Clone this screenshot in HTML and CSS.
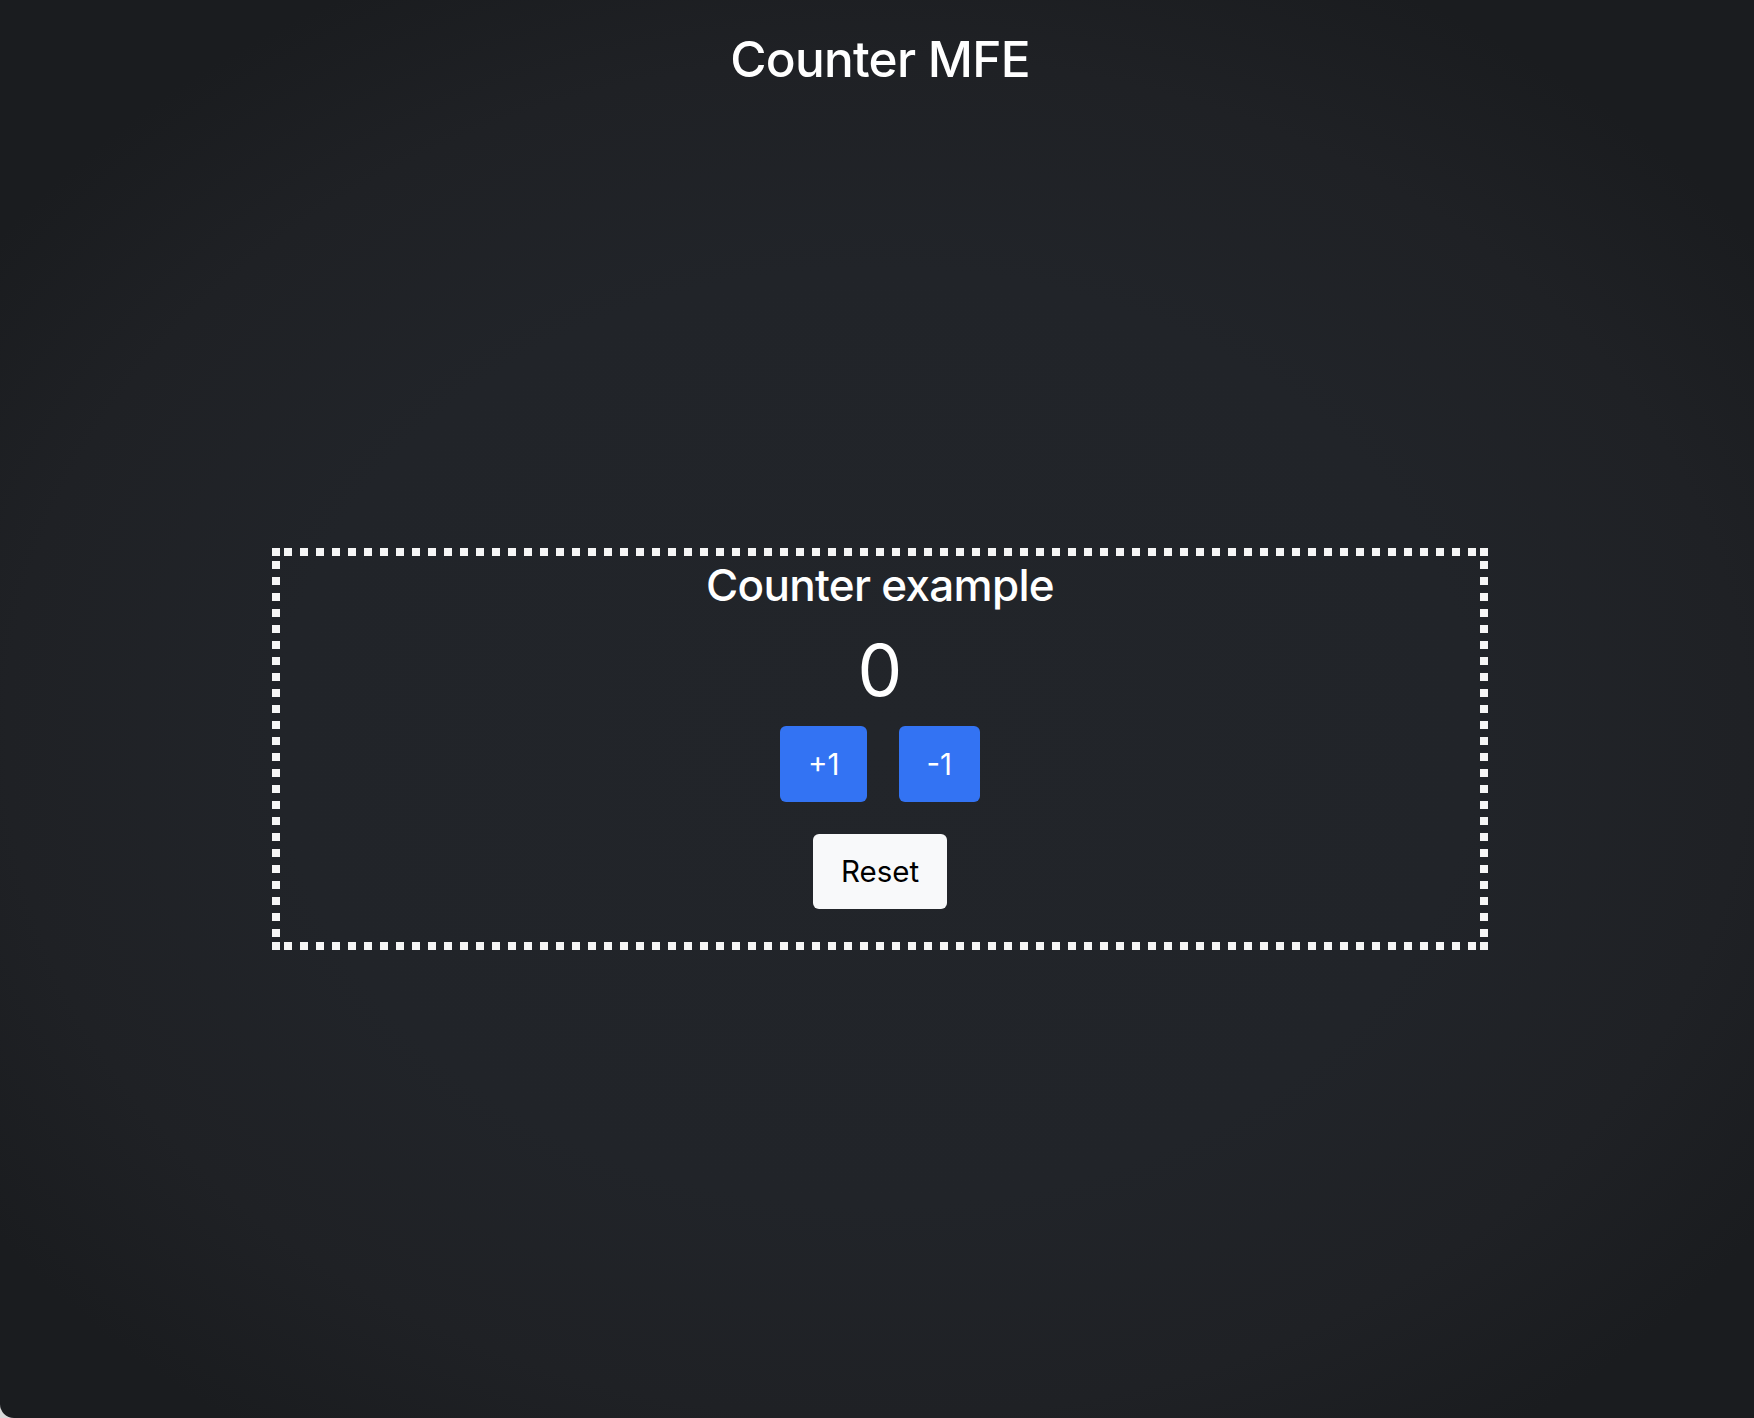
FILE: index.html
```html
<!DOCTYPE html>
<html lang="en">
<head>
<meta charset="utf-8">
<title>Counter MFE</title>
<link rel="stylesheet" href="styles.css">
</head>
<body>
<div class="page">
  <h1 class="title">Counter MFE</h1>
  <main class="main">
    <section class="counter-box">
      <h2 class="counter-heading">Counter example</h2>
      <div class="counter-value">0</div>
      <div class="button-row">
        <button class="btn btn-primary" type="button">+1</button>
        <button class="btn btn-primary" type="button">-1</button>
      </div>
      <div class="button-row reset-row">
        <button class="btn btn-light" type="button">Reset</button>
      </div>
    </section>
  </main>
</div>
</body>
</html>
```

FILE: styles.css
```css
html {
  background: #d9d9d9;
}
body {
  margin: 0;
  font-family: Inter, "Noto Sans", "Liberation Sans", sans-serif;
  color: #ffffff;
}
.page {
  min-height: 1418px;
  box-sizing: border-box;
  border-bottom-left-radius: 14px;
  overflow: hidden;
  background:
    radial-gradient(ellipse 62% 60% at 50% 52%, #22252a 0%, #212429 55%, #1f2125 80%, #1a1c1f 100%);
  padding-left: 6px;
}
.title {
  margin: 0;
  padding-top: 30px;
  font-size: 49.5px;
  line-height: 59.4px;
  font-weight: 500;
  letter-spacing: -0.015em;
  text-align: center;
}
.main {
  display: flex;
  justify-content: center;
}
.counter-box {
  width: 1216px;
  height: 402px;
  box-sizing: border-box;
  margin-top: 459px;
  padding: 10.6px 8px 8px;
  text-align: center;
  background:
    linear-gradient(#f6f6f6, #f6f6f6) 0 0 / 8px 8px no-repeat,
    linear-gradient(#f6f6f6, #f6f6f6) 100% 0 / 8px 8px no-repeat,
    linear-gradient(#f6f6f6, #f6f6f6) 0 100% / 8px 8px no-repeat,
    linear-gradient(#f6f6f6, #f6f6f6) 100% 100% / 8px 8px no-repeat,
    linear-gradient(90deg, #f6f6f6 8px, transparent 8px) 12px 0 / 16px 8px repeat-x,
    linear-gradient(90deg, #f6f6f6 8px, transparent 8px) 12px 100% / 16px 8px repeat-x,
    linear-gradient(180deg, #f6f6f6 8px, transparent 8px) 0 13px / 8px 16px repeat-y,
    linear-gradient(180deg, #f6f6f6 8px, transparent 8px) 100% 13px / 8px 16px repeat-y;
}
.counter-heading {
  margin: 0;
  font-size: 44px;
  line-height: 52.8px;
  font-weight: 500;
  letter-spacing: -0.016em;
}
.counter-value {
  margin-top: 16px;
  font-size: 71px;
  line-height: 85px;
  font-weight: 400;
}
.button-row {
  margin-top: 13px;
  display: flex;
  justify-content: center;
  gap: 32px;
}
.reset-row {
  margin-top: 32px;
}
.btn {
  font-family: inherit;
  font-size: 29.5px;
  line-height: 44px;
  font-weight: 400;
  padding: 16px 27.5px;
  border: 0;
  border-radius: 6px;
  cursor: pointer;
}
.btn-primary {
  background: #3373f3;
  color: #ffffff;
}
.btn-light {
  background: #f8f9fa;
  color: #000000;
  line-height: 43px;
}
```
